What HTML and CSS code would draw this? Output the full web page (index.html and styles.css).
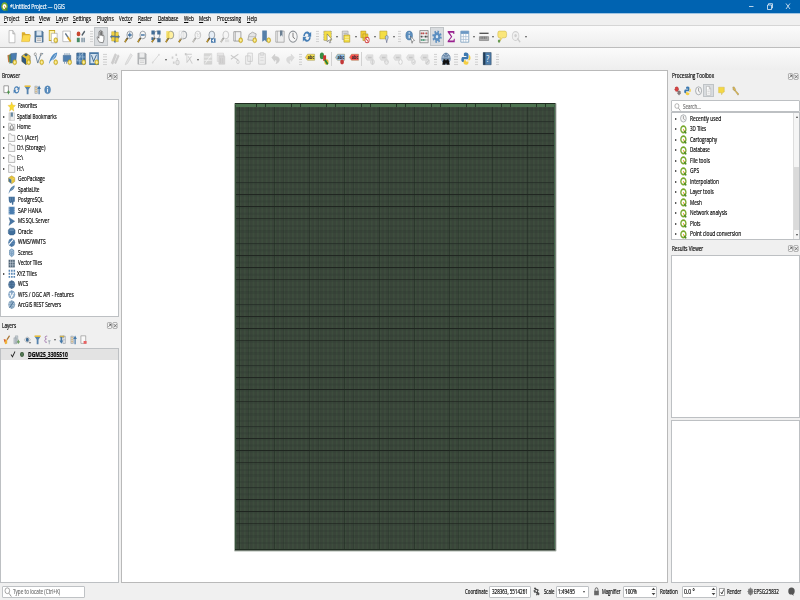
FILE: index.html
```
<!DOCTYPE html>
<html lang="en">
<head>
<meta charset="utf-8">
<title>*Untitled Project — QGIS</title>
<link rel="stylesheet" href="styles.css">
</head>
<body>
<div class="app">
  <header class="titlebar">
    <i data-icon="qgis"></i><span class="title" data-w="55">*Untitled Project — QGIS</span>
    <svg class="winctl" viewBox="0 0 60 13"><path d="M10 6.500h4.500M28.500 5h4v4.500h-4zM29.500 5V3.700h4V8h-1M47 3.500l4 5.500M51 3.500L47 9"/></svg>
  </header>
  <nav class="menubar" id="menu"></nav>
  <div class="toolbar first" id="tb1"></div>
  <div class="toolbar second" id="tb2"></div>
  <main class="work">
    <aside class="left">
      <section class="dock browser">
        <div class="head"><span data-w="18">Browser</span><i data-icon="dock"></i></div>
        <div class="tools" data-tools="addsel refresh filter collapse info"></div>
        <div class="tree" id="browser"></div>
      </section>
      <section class="dock layers">
        <div class="head"><span data-w="14">Layers</span><i data-icon="dock"></i></div>
        <div class="tools" data-tools="brush group eye filter expr:m expand collapse remove"></div>
        <div class="tree"><div class="layer"><i data-icon="check"></i><b class="dot"></b><span class="lname" data-w="40"><u>DGM25_3305510</u></span></div></div>
      </section>
    </aside>
    <div class="canvas"><svg class="map" id="map" viewBox="0 0 323 450"></svg></div>
    <aside class="right">
      <section class="dock processing">
        <div class="head"><span data-w="42">Processing Toolbox</span><i data-icon="dock"></i></div>
        <div class="tools" data-tools="gears python clock doc:p notes wrench"></div>
        <div class="search"><i data-icon="search"></i><span data-w="18">Search…</span></div>
        <div class="tree scrolled"><div class="rows" id="toolbox"></div><div class="scroll"><b class="up"></b><b class="down"></b></div></div>
      </section>
      <section class="dock results">
        <div class="head"><span data-w="31">Results Viewer</span><i data-icon="dock"></i></div>
        <div class="tree"></div>
        <div class="tree info"></div>
      </section>
    </aside>
  </main>
  <footer class="status">
    <div class="field locate"><i data-icon="search"></i><span data-w="47">Type to locate (Ctrl+K)</span></div>
    <span class="push" data-w="22.500">Coordinate</span>
    <div class="field coord"><span data-w="36">328363, 5514261</span></div>
    <i data-icon="extent"></i>
    <span class="scale" data-w="10.500">Scale</span>
    <div class="field combo"><span data-w="17">1:49495</span><b class="down"></b></div>
    <i class="lock" data-icon="lock"></i>
    <span data-w="18.500">Magnifier</span>
    <div class="field spin"><span data-w="12">100%</span><i data-icon="spin"></i></div>
    <span data-w="18">Rotation</span>
    <div class="field spin rot"><span data-w="11">0.0 °</span><i data-icon="spin"></i></div>
    <i class="box" data-icon="check"></i><span data-w="14.500">Render</span>
    <i class="crs" data-icon="crs"></i><span data-w="25">EPSG:25832</span>
    <i class="msg" data-icon="bubble"></i>
  </footer>
</div>
<script src="script.js"></script>
</body>
</html>
```
FILE: styles.css
```
* { box-sizing: border-box; }
body { margin: 0; width: 800px; height: 600px; overflow: hidden; background: #f0f0f0; font: 7px/10px "Open Sans", "Noto Sans", sans-serif; color: #080808; }
.app { width: 800px; height: 600px; display: flex; flex-direction: column; }
i { display: block; flex: none; width: 8px; height: 10px; font-style: normal; }
i svg { display: block; width: 100%; height: 100%; overflow: visible; }
.fit { display: block; flex: none; white-space: nowrap; height: 10px; line-height: 10px; }
.fit > span { display: inline-block; transform-origin: 0 50%; -webkit-text-stroke: .2px currentColor; }
u { text-decoration-thickness: .6px; text-underline-offset: 1px; }

.titlebar { height: 14px; background: #0063b1; border-bottom: 1px solid #9fc4e2; color: #fff; display: flex; align-items: center; flex: none; padding-left: 1px; }
.titlebar i { width: 7px; height: 9px; margin-right: 2px; }
.winctl { width: 60px; height: 13px; margin-left: auto; position: relative; left: -1px; fill: none; stroke: #e3eef7; stroke-width: .8; }
.menubar { height: 10.500px; flex: none; display: flex; padding-left: 4px; align-items: center; background: #f0f0f0; }

.toolbar { display: flex; flex: none; align-items: center; padding-left: 5.200px; background: linear-gradient(#fbfbfb, #eeeeee); border-top: 1px solid #d6d6d6; }
.toolbar.first { height: 22.500px; }
.toolbar.second { height: 23px; border-top-color: #bdbdbd; }
.tool { width: 13.730px; height: 19px; display: flex; align-items: center; justify-content: center; flex: none; position: relative; }
.tool i { width: 10px; height: 13.300px; }
.tool.menu { width: 18.900px; padding-right: 5px; }
.tool.menu::after { content: ""; position: absolute; right: 1.500px; top: 9px; border: 1.600px solid transparent; border-top: 2.200px solid #555; }
.tool.pressed { background: #d9dcdf; border: 1px solid #bfc3c6; }
.tool.off i { opacity: .5; filter: grayscale(.9); }
.grip { width: 6.800px; height: 13px; flex: none; background: radial-gradient(circle, #c9c9c9 .5px, transparent .8px) 2.500px 0 / 1.700px 2.600px; background-clip: content-box; padding: 0 1.500px 0 2px; }
.vsep { width: 2.500px; height: 14px; border-left: 1px solid #d2d2d2; flex: none; }

.work { height: 513px; flex: none; display: flex; }
.left { width: 121px; display: flex; flex-direction: column; }
.right { width: 132px; padding-left: 2.500px; display: flex; flex-direction: column; }
.canvas { width: 547px; border: 1px solid #b9b9b9; background: #fff; padding: 31px 0 0 112px; }
.map { display: block; width: 323px; height: 450px; }
.head { height: 12px; display: flex; align-items: center; justify-content: space-between; padding: 0 1px 0 1.500px; }
.left .head { width: 119px; }
.head i { width: 11px; height: 7px; }
.tools { height: 17px; display: flex; align-items: center; padding-left: 1.500px; }
.browser .tools { padding-bottom: 1px; }
.tools .tool { width: 10.300px; height: 13px; }
.tools .tool i { width: 7.200px; height: 9.600px; }
.tools .tool.menu { width: 15px; }
.tools .tool.menu::after { top: 6px; }
.tree { background: #fff; border: 1px solid #bdc0c3; }
.browser { height: 249px; }
.browser .tree { width: 119px; height: 217.500px; padding-top: .9px; }
.layers .head { padding-top: 1px; }
.layers .tree { width: 119px; height: 235px; }
.row { height: 10.480px; display: flex; align-items: center; }
.row::before { content: ""; width: 7px; flex: none; }
.row.kids::before { width: 0; height: 0; margin: 0 3px 0 2px; border: 1.800px solid transparent; border-left: 2.200px solid #222; border-right: 0; }
.row i { width: 7.400px; height: 9.200px; margin-right: 2px; }
.row:not(.kids)::before { width: 7.200px; }
.layer { height: 10.500px; background: #e3e3e3; display: flex; align-items: center; padding-left: 8.500px; }
.layer i { width: 6px; height: 7px; }
.layer .fit { position: relative; top: .6px; }
.dot { width: 4.500px; height: 5.500px; border-radius: 50%; background: #567e56; border: .5px solid #3f5d40; margin: 0 4px 0 4px; }
.lname { font-weight: 700; }

.processing { height: 173.500px; }
.processing .tools { height: 18px; padding: 0 0 1px 2px; }
.processing .tools .tool:nth-child(n+5) { margin-left: 3px; }
.search { height: 12px; background: #fff; border: 1px solid #bdc0c3; display: flex; align-items: center; padding: 1px 0 0 2px; gap: 2px; color: #777; border-radius: 1px; }
.search i { width: 7px; height: 8px; }
.scrolled { height: 127.500px; display: flex; justify-content: space-between; overflow: hidden; }
.rows { padding-top: .6px; }
.rows .row.kids::before { margin-left: 3px; }
.rows .row i { margin-left: .6px; margin-right: 2.700px; width: 6.800px; height: 8.800px; }
.scroll { width: 6px; display: flex; flex-direction: column; align-items: center; justify-content: space-between; padding: 3px 0; background: linear-gradient(#f5f5f5 0 54px, #dadada 54px 117px, #f5f5f5 117px); border-left: 1px solid #ddd; }
.up, .down { width: 0; height: 0; border: 1.500px solid transparent; border-top: 0; border-bottom: 2.500px solid #444; }
.down { border: 1.500px solid transparent; border-bottom: 0; border-top: 2.500px solid #444; }
.results .tree { height: 163.500px; }
.results .head { height: 11.500px; }
.results .info { height: 163px; margin-top: 2px; }

.status { height: 17px; flex: none; display: flex; align-items: center; padding: .8px 0 0 1.500px; }
.field { background: #fff; border: 1px solid #bfc2c5; border-radius: 1px; height: 12.500px; display: flex; align-items: center; padding-left: 1.500px; flex: none; }
.locate { width: 83px; gap: 1px; color: #777; }
.push { margin-left: 380.500px; }
.coord { width: 42px; margin: 0 2px 0 1.500px; }
.status > i { width: 7px; height: 9px; }
.scale { margin-left: 3.500px; }
.combo { width: 33.500px; justify-content: space-between; padding-right: 3px; margin: 0 4px 0 1.500px; }
.lock { margin-right: 2px; }
.spin { width: 34.500px; justify-content: space-between; margin: 0 3px 0 2px; }
.spin i { width: 5px; height: 9px; }
.rot { margin: 0 2px 0 3.500px; width: 35px; }
.status > .box { width: 6.500px; height: 8px; background: #fff; border: 1px solid #aaa; margin-right: 1.500px; }
.crs { margin: 0 0 0 6px; }
.msg { margin-left: 9px; }
```
FILE: script.js
```
const star = '<circle cx="18.500" cy="18.500" r="4.500" fill="#e9cd3f" stroke="#a88b14"/><path d="M18.500 16v5M16 18.500h5" stroke="#fff6c0" stroke-width="1.500"/>';
const page = '<path d="M5 1h9l5 6v16H5z" fill="#fff" stroke="#888"/><path d="M14 1v6h5" fill="#ddd" stroke="#888"/>';
const lens = (x, f = '#f6f6f6') => `<path d="M9 14L2 22" stroke="#5c4a25" stroke-width="3.500"/><path d="M6 17L2 22" stroke="#d8a92c" stroke-width="2"/><circle cx="14" cy="9" r="7" fill="${f}" stroke="#7c858c" stroke-width="1.500"/>${x || ''}`;
const tag = (f, x = '') => `<path d="M1 10l5-6h17v11H6z" fill="${f}" stroke="#887a3a" stroke-width=".8"/><text x="6" y="13" font-size="9" font-weight="700" fill="#222">abc</text>${x}`;
const offtag = x => `<path d="M1 10l4-5h14v10H5z" fill="#ccc" stroke="#aaa"/><path d="M7 10h9" stroke="#999" stroke-width="3"/><circle cx="18" cy="18" r="4.500" fill="#ddd" stroke="#aaa" stroke-width="1.500"/>${x}`;
const globe = (f, s) => `<circle cx="12" cy="12" r="10" fill="${f}" stroke="${s}" stroke-width="1.500"/><path d="M2 12h20M12 2v20M5 6q7 4 14 0M5 18q7-4 14 0M12 2q-10 10 0 20q10-10 0-20" fill="none" stroke="${s}" stroke-width="1.200"/>`;
const I = {
  qgis: '<circle cx="12" cy="12" r="9" fill="#fff" stroke="#78a92d" stroke-width="4.500"/><path d="M15 16l7 7" stroke="#4d8b24" stroke-width="4.500"/><path d="M11 11l4 5" stroke="#e99b26" stroke-width="3"/>',
  new: page,
  open: '<path d="M2 4h7l2 3h10v13H2z" fill="#dcae2c"/><path d="M1 21L5 9h18l-3 12z" fill="#fcd94f" stroke="#cda535" stroke-width=".8"/>',
  save: '<path d="M2 2h18l2 2v18H2z" fill="#567da3" stroke="#42627f"/><path d="M6 2h12v8H6z" fill="#d9e5ef"/><path d="M5 13h14v9H5z" fill="#eee"/><path d="M7 16h10M7 19h10" stroke="#777"/>',
  layout: '<path d="M3 1h13v18H3z" fill="#fff5b0" stroke="#c9a928" stroke-width="2"/><path d="M8 6h14v17H8z" fill="#fff" stroke="#888"/>' + star,
  manager: '<path d="M2 2h18v19H2z" fill="#fff" stroke="#888"/><path d="M8 6l8 9" stroke="#678" stroke-width="3"/><path d="M14 13l7 8" stroke="#d6a52c" stroke-width="4"/>',
  style: '<circle cx="6" cy="7" r="4.500" fill="#c9472f"/><path d="M14 10l7-8" stroke="#4d5a64" stroke-width="3"/><path d="M2 14h7v8H2z" fill="#468b64"/><path d="M13 14h3v8h-3zM18 14h3v8h-3z" fill="#6d8598"/>',
  hand: '<path d="M8 22c-3-4-6-7-5-9s3 0 4 2V4c0-2 3-2 3 0v6V2c0-2 3-2 3 0v8V4c0-2 3-2 3 0v7c0-2 3-2 3 0v6l-2 6z" fill="#fff" stroke="#555" stroke-width="1.300"/>',
  pansel: '<path d="M12 0l5 6h-3v4h4V7l6 5-6 5v-3h-4v4h3l-5 6-5-6h3v-4H6v3l-6-5 6-5v3h4V6H7z" fill="#4d75a3"/><path d="M4 3h7v7H4zM13 4h7v7h-7zM4 13h7v7H4zM13 14h7v7h-7z" fill="#f3d442" stroke="#a78c16" stroke-width=".7"/>',
  zin: lens('<path d="M14 4.500v9M9.500 9h9" stroke="#3c6d9e" stroke-width="2.500"/>'),
  zout: lens('<path d="M9.500 9h9" stroke="#3c6d9e" stroke-width="2.500"/>'),
  zfull: lens() + '<path d="M1 1h8v7H1zM15 1h8v7h-8zM15 15h8v7h-8zM1 13h5v5H1z" fill="#416c96"/>',
  zsel: lens('', '#fff0a0') + '<path d="M3 2h8v13H3z" fill="#f5d94b" opacity=".8"/>',
  zlayer: lens('', '#eee') + '<path d="M3 2h9v15H3z" fill="#fff" stroke="#aaa" opacity=".6"/>',
  znative: lens('<text x="10" y="12" font-size="8" fill="#777">1:1</text>') ,
  zlast: lens('<path d="M12 15h11v8H12z" fill="#4b7cae"/><path d="M19 16l-5 3 5 3z" fill="#fff"/>', '#e6eef6'),
  znext: lens('<path d="M12 17h10v5H12z" fill="#ccc"/>'),
  mapview: '<path d="M2 3h17v17H2z" fill="#f2f2f2" stroke="#888" stroke-width="1.500"/><path d="M6 3v17" stroke="#888"/>' + star,
  map3d: '<path d="M2 18L5 8l8-4 9 3-3 12z" fill="#e5e5e5" stroke="#999" stroke-width="1.500"/><path d="M5 12h15" stroke="#999"/>' + star,
  bookmark: '<path d="M3 1h11v21l-5-4-6 3z" fill="#557fa9"/>' + star,
  bookmarks: '<path d="M2 2h20v20H2z" fill="#eee" stroke="#999" stroke-width="1.500"/><path d="M6 2v20" stroke="#999"/><path d="M12 1h6v11l-3-3-3 3z" fill="#6a7f92"/>',
  clock: '<circle cx="12" cy="12" r="10" fill="#f6f6f6" stroke="#8b9095" stroke-width="2"/><path d="M12 5v8l5 3" fill="none" stroke="#666" stroke-width="1.700"/>',
  refresh: '<path d="M3 11C4 3 14 0 19 6l3-3v9h-9l3-3C12 4 7 6 7 11zM21 13c-1 8-11 11-16 5l-3 3v-9h9l-3 3c4 5 9 3 9-2z" fill="#477fb6"/>',
  select: '<path d="M2 2h18v17H2z" fill="#f4de45" stroke="#666" stroke-dasharray="2 1"/><path d="M10 7l11 10-5 .5 3 5-3 1-2-5-4 3z" fill="#fff" stroke="#555"/>',
  selval: '<path d="M3 2h14v15H3z" fill="#ddd" stroke="#888"/><path d="M7 9h14v13H7z" fill="#f4de45" stroke="#977f17"/><path d="M6 6h9" stroke="#888"/><path d="M9 13h10M9 17h10" stroke="#fff"/>',
  desel: '<path d="M2 2h12v12H2zM7 7h12v12H7z" fill="#f2cf38" stroke="#a6851c"/><circle cx="17" cy="18" r="5" fill="#fff" stroke="#d34747" stroke-width="2"/><path d="M14 15l6 6" stroke="#d34747" stroke-width="2"/>',
  selloc: '<path d="M2 2h17v14H2z" fill="#f4de45" stroke="#a68b1e"/><path d="M15 13c0-4 7-4 7 0 0 3-3 5-3.500 10C18 18 15 16 15 13z" fill="#b9d1e3" stroke="#557"/>',
  identify: '<circle cx="10" cy="10" r="8" fill="#5c8fbf" stroke="#3d6c98"/><path d="M10 9v6M10 4v2.500" stroke="#fff" stroke-width="2.500"/><path d="M13 11l10 8-5 1-1 4z" fill="#fff" stroke="#444"/>',
  abacus: '<path d="M2 1h20v22H2z" fill="#eee" stroke="#777" stroke-width="1.500"/><path d="M2 6h20M2 12h20M2 18h20" stroke="#777"/><path d="M5 6h7M16 6h3" stroke="#c34848" stroke-width="3" stroke-dasharray="3 1"/><path d="M5 12h4M14 12h6" stroke="#444" stroke-width="3" stroke-dasharray="3 1"/><path d="M5 18h10" stroke="#33996d" stroke-width="3" stroke-dasharray="3 1"/>',
  gear: '<circle cx="12" cy="12" r="9" fill="none" stroke="#5b8ec0" stroke-width="4.500" stroke-dasharray="3.500 3.570"/><circle cx="12" cy="12" r="5.500" fill="#dce8f3" stroke="#5b8ec0" stroke-width="5"/>',
  sigma: '<path d="M4 2h16v5h-2l-1-2h-8l6 7-7 7h10l1-3h2v6H4v-2l8-8-8-8z" fill="#99208e"/>',
  table: '<path d="M2 2h19v20H2z" fill="#fff" stroke="#6b93b7" stroke-width="1.500"/><path d="M2 2h19v5H2z" fill="#6b98c4"/><path d="M2 12h19M2 17h19M8 7v15M14 7v15" stroke="#a4bcd1" stroke-width="1.500"/>',
  measure: '<path d="M1 6h22" stroke="#555" stroke-width="2.500"/><path d="M1 12h22v7H1z" fill="#aaa" stroke="#666"/><path d="M5 12v4M9 12v4M13 12v4M17 12v4" stroke="#444"/>',
  tip: '<path d="M5 2h14q4 0 4 4v4q0 4-4 4h-6l-6 6 1-6H5q-3 0-3-4V6q0-4 3-4z" fill="#fae67a" stroke="#c8af40"/><circle cx="5" cy="20" r="3" fill="#689a50"/>',
  locate: '<circle cx="11" cy="11" r="8" fill="#eee" stroke="#aaa" stroke-width="2"/><circle cx="11" cy="10" r="3" fill="#aaa"/><path d="M15 15l7 7" stroke="#aaa" stroke-width="3"/>',
  dsm: '<path d="M1 6l10-3v13L3 19z" fill="#c9763b"/><path d="M4 6l13-3v14L6 21z" fill="#578f5d"/><path d="M9 3l14-1-2 16-11 2z" fill="#4a7db1" stroke="#315b84"/>' + star,
  gpkg: '<path d="M2 7l10-5 10 5v10l-10 6L2 17z" fill="#e8c53b" stroke="#8b7322"/><path d="M2 7l10 5v11L2 17z" fill="#48749c"/><path d="M2 7l10 5 10-5M12 12v11" fill="none" stroke="#f7e387" stroke-width="1.500"/>',
  gpkgnew: '<path d="M2 7l10-5 10 5v10l-10 6L2 17z" fill="#e8c53b" stroke="#555"/><path d="M2 7l10 5v11L2 17z" fill="#33597b"/><path d="M7 5l5-2 5 2-5 3z" fill="#33597b"/>' + star,
  vnew: '<path d="M3 3l6 17L17 3h5" fill="none" stroke="#56728b" stroke-width="1.700"/><circle cx="3" cy="4" r="2.500" fill="#fff" stroke="#555"/><circle cx="17" cy="4" r="2" fill="#fff" stroke="#555"/>' + star,
  feather: '<path d="M2 23C4 12 11 2 22 1 22 9 15 14 7 16z" fill="#4f7ba5"/><path d="M3 22L19 4" stroke="#c6dbec"/>',
  feathernew: '<path d="M2 23C4 12 11 2 22 1 22 9 15 14 7 16z" fill="#4f8bc5"/><path d="M3 22L19 4" stroke="#fff"/>' + star,
  chip: '<path d="M3 6h18v11H3z" fill="#4f7faf" stroke="#345d86"/><path d="M7 2v4M12 2v4M17 2v4M6 17v4M11 17v4" stroke="#7a97b2" stroke-width="2"/>' + star,
  mesh: '<path d="M2 2h20v20H2z" fill="#4778a8" stroke="#2d5680" stroke-width="1.500"/><path d="M2 9h20M2 16h20M9 2v20M16 2v20M2 16L16 2" stroke="#c9ddef"/>' + star,
  virtual: '<path d="M2 2h20v20H2z" fill="#d3e2ef" stroke="#4677a5" stroke-width="3"/><path d="M6 6l5 11 7-12" fill="none" stroke="#3c658c" stroke-width="2"/>' + star,
  pencils: '<path d="M3 20L12 3l4 2L7 22zM11 20l8-15 3 2-8 14z" fill="#b5a8a8" stroke="#948989"/>',
  pencil: '<path d="M4 20L16 3l4 3L8 21l-5 2z" fill="#d8d5cf" stroke="#999"/>',
  line: '<path d="M4 19L19 5" stroke="#aaa" stroke-width="1.500"/><circle cx="4" cy="19" r="2" fill="#bbb"/><circle cx="19" cy="5" r="2" fill="#bbb"/>',
  points: '<path d="M4 8h4v4H4zM13 3h4v4h-4zM16 11h3v3h-3zM7 17h4v4H7z" fill="#aaa"/><circle cx="18" cy="19" r="4" fill="#ddd" stroke="#aaa" stroke-width="2"/>',
  vertex: '<path d="M3 4h16M7 4v16M8 18L18 8M10 8l10 13" stroke="#a5a5a5" stroke-width="2"/><path d="M2 2h4v4H2z" fill="#999"/>',
  multi: '<path d="M3 3h18v19H3z" fill="#bcb8a5" stroke="#999"/><path d="M3 9h18M3 15h18M5 21L20 5" stroke="#fff" stroke-width="1.500"/>',
  trash: '<path d="M3 2h15v15H3z" fill="#ddd" stroke="#b99898"/><path d="M7 8h14v14H7z" fill="#c5b4b4" stroke="#a58f8f"/><path d="M3 6h18M11 11v9M16 11v9" stroke="#a08888"/>',
  cut: '<path d="M2 6l18 9M2 13l18-9" stroke="#999" stroke-width="2"/><circle cx="19" cy="18" r="3" fill="none" stroke="#999" stroke-width="1.500"/>',
  copy: '<path d="M9 2h11v15H9zM4 7h11v15H4z" fill="#f1f1f1" stroke="#999" stroke-width="1.500"/>',
  paste: '<path d="M4 3h16v19H4z" fill="#e5e5e5" stroke="#999" stroke-width="1.500"/><path d="M8 1h8v5H8zM8 10h8M8 15h8" fill="#ccc" stroke="#999"/>',
  undo: '<path d="M2 10l7-6v4q12 0 11 7-1 5-8 6 5-7-3-7v3z" fill="#b0a8a0" stroke="#999"/>',
  redo: '<path d="M22 10l-7-6v4Q3 8 4 15q1 5 8 6-5-7 3-7v3z" fill="#c4c4c4" stroke="#aaa"/>',
  label: tag('#f4df51'),
  diagram: '<ellipse cx="7" cy="7" rx="5" ry="6" fill="#398e47"/><path d="M10 6h7v10h-7z" fill="#cf3030"/><ellipse cx="18" cy="18" rx="5" ry="5" fill="#e2b92a"/><path d="M14 14l7 8" stroke="#278134" stroke-width="4"/>',
  pinlab: tag('#91bfe9', '<circle cx="17" cy="18" r="4.500" fill="#c33838"/>'),
  redlab: tag('#ff5454'),
  l1: offtag('<path d="M18 14v9" stroke="#aaa" stroke-width="2"/>'), l2: offtag('<path d="M12 18q6-5 11 0" stroke="#999" fill="none"/>'),
  l3: offtag('<path d="M18 14v8M14 18h8" stroke="#fff" stroke-width="2"/>'), l4: offtag('<path d="M16 18q2 4 5-1" stroke="#888" fill="none"/>'), l5: offtag('<path d="M14 22l8-8" stroke="#aaa" stroke-width="3"/>'),
  osm: globe('#b5c9dc', '#4b6f95') + '<path d="M3 23l3-10h4l2 3 2-3h4l3 10h-7l-2-4-2 4z" fill="#111"/>',
  python: '<path d="M12 1c-6 0-5 2-5 6h6v2H3c-3 2-3 9 1 9h3v-5h9c3-1 2-4 2-9q-1-3-6-3z" fill="#3d79b0"/><path d="M12 23c6 0 6-3 6-6h-6v-2h9c3-2 2-8-1-9h-1v5q-1 4-5 4H8c-3 2-3 8 4 8z" fill="#f5cf44"/>',
  help: '<path d="M3 1h19v22H3z" fill="#4d7dab" stroke="#223b53"/><path d="M3 1h5v22H3z" fill="#243e57"/><text x="10" y="18" font-size="17" fill="#fff">?</text>',
  dock: '<g fill="#fafafa" stroke="#777" stroke-width="1.500"><rect x="1" y="2" width="9" height="20" rx="2"/><rect x="13" y="2" width="9" height="20" rx="2"/></g><path d="M3 17L8 7M4 7h4v7M15 7l6 11M21 7l-6 11" fill="none" stroke="#333" stroke-width="1.500"/>',
  addsel: '<path d="M3 2h15v17H3z" fill="#fff" stroke="#777" stroke-width="2"/><path d="M18 14v9M14 18h9" stroke="#489445" stroke-width="3"/>',
  filter: '<path d="M2 4h20l-7 8v11H9V12z" fill="#5583ae"/><path d="M2 1h20v4H2z" fill="#e7bd3c"/>',
  collapse: '<path d="M3 3h8v18H3z" fill="#eee" stroke="#456"/><path d="M4 7h6M4 12h6M4 17h6" stroke="#c18f2f" stroke-width="2"/><path d="M15 23V10h-4l6-9 6 9h-4v13z" fill="#4579a9"/>',
  expand: '<path d="M13 3h8v18h-8z" fill="#eee" stroke="#456"/><path d="M3 2h14v4H3zM14 12h7" fill="#e5ba41" stroke="#789"/><path d="M5 5h5v9h4l-6 8-7-8h4z" fill="#4579a9"/>',
  info: '<circle cx="12" cy="12" r="10" fill="#5a8dbe" stroke="#3f719f"/><path d="M12 10v8M12 5v3" stroke="#fff" stroke-width="3"/>',
  brush: '<path d="M13 12l9-10" stroke="#aa7738" stroke-width="4"/><path d="M3 11l11 1v9l-7 2z" fill="#efb33b"/><path d="M2 10l7 2-3 7z" fill="#d65739"/>',
  group: '<path d="M8 2h8v18H8zM3 7h9v15H3z" fill="#c7d0d5" stroke="#76838c"/><path d="M18 12v10M13 17h10" stroke="#6ea061" stroke-width="3"/>',
  eye: '<path d="M1 12q10-14 20 0-10 13-20 0z" fill="#eee" stroke="#777"/><circle cx="11" cy="12" r="5" fill="#3f6c94"/><path d="M16 18h8l-4 4z" fill="#555"/>',
  expr: '<path d="M11 3C2 1 2 9 8 10 0 11 1 20 10 18" fill="none" stroke="#88549a" stroke-width="2"/><path d="M13 13h10l-4 5v5h-3v-5z" fill="#a7b2bb"/>',
  remove: '<path d="M3 2h16v19H3z" fill="#f9f9f9" stroke="#777" stroke-width="1.500"/><path d="M12 15h10v7H12z" fill="#e96262"/>',
  gears: '<circle cx="9" cy="8" r="6" fill="#d64141" stroke="#a43737" stroke-width="2" stroke-dasharray="3 2"/><circle cx="17" cy="17" r="5" fill="#8a7b7b" stroke="#555" stroke-width="2" stroke-dasharray="2 2"/>',
  doc: page + '<path d="M8 10h8M8 14h8M8 18h8" stroke="#888"/>',
  notes: '<path d="M2 3h19v12l-6 2-3 5v-5H2z" fill="#f4d845" stroke="#c6a72f"/>',
  wrench: '<path d="M2 3l5-1 5 6-1 3-4 1-5-5 4 1zM11 10l12 10-3 3L9 12" fill="#e2bd4c" stroke="#86754b"/>',
  search: '<circle cx="10" cy="9" r="7" fill="none" stroke="#777" stroke-width="1.700"/><path d="M15 15l7 8" stroke="#777" stroke-width="2"/>',
  fav: '<path d="M12 0l3 8 9 1-7 6 2 9-7-5-7 5 2-9-7-6 9-1z" fill="#fbdd32" stroke="#d8ae2d"/>',
  bm: '<path d="M3 2h18v20H3z" fill="#eee" stroke="#999"/><path d="M7 2v20" stroke="#888"/><path d="M9 1h7v13l-3-3-4 3z" fill="#64869f"/>',
  home: '<path d="M2 3h7l2 3h11v16H2z" fill="#f6f6f6" stroke="#888" stroke-width="1.500"/><path d="M7 12l5-4 5 4v7H7z" fill="none" stroke="#444" stroke-width="2"/>',
  folder: '<path d="M2 2h7l3 4h10v16H2z" fill="#f7f7f7" stroke="#909090" stroke-width="1.700"/>',
  pg: '<path d="M2 2h20v13h-4l-1 8h-4l-1-7-5 3-4-5z" fill="#426e9a"/><path d="M8 4v10M15 4v8" stroke="#8eb1cf"/>',
  hana: '<path d="M2 2h20v20H2z" fill="#497db0"/><path d="M2 5h3M2 10h3M2 15h3M2 20h3M19 5h3M19 10h3M19 15h3M19 20h3" stroke="#fff" stroke-width="2"/>',
  ms: '<path d="M3 1l19 10L3 22l4-10z" fill="#4776a5" stroke="#345c84"/>',
  oracle: '<path d="M6 3h12l5 5v8l-5 5H6l-5-5V8z" fill="#416f9c" stroke="#28527c"/><path d="M5 8h14" stroke="#9bb9d4" stroke-width="2"/>',
  wms: globe('#6b9ac8', '#345f8b') + '<path d="M3 17L18 3" stroke="#fff" stroke-width="3"/>',
  scenes: '<path d="M5 6l7-4 7 4v12l-7 5-7-5z" fill="#a1bfd9" stroke="#45739d" stroke-width="1.500"/><path d="M5 6l7 4 7-4M12 10v12M5 12l7 4 7-4" fill="none" stroke="#45739d"/>',
  vt: '<path d="M2 2h20v20H2z" fill="#4d6274"/><path d="M8.500 2v20M15.500 2v20M2 8.500h20M2 15.500h20" stroke="#dfe8ef" stroke-width="1.500"/>',
  xyz: '<path d="M2 2h5v5H2zM10 2h5v5h-5zM18 2h5v5h-5zM2 10h5v5H2zM10 10h5v5h-5zM18 10h5v5h-5zM2 18h5v5H2zM10 18h5v5h-5zM18 18h5v5h-5z" fill="#5685b4"/>',
  wcs: globe('#6b92b8', '#294e74'), wfs: globe('#c5d9eb', '#4f7ca8') + '<path d="M7 7l5 12 6-12" fill="none" stroke="#fff" stroke-width="3"/>',
  arc: globe('#c5d9eb', '#557d9e') + '<path d="M5 20L18 5" stroke="#315b81" stroke-width="2"/>',
  check: '<path d="M4 12l6 8L20 2" fill="none" stroke="#222" stroke-width="3.500"/>',
  extent: '<path d="M4 3l15 6M2 10l18 8M9 2L5 15M17 7l-5 15" stroke="#444" stroke-width="3"/><circle cx="18" cy="18" r="4" fill="#555"/>',
  lock: '<path d="M4 10h16v12H4z" fill="#666"/><path d="M7 11V6q5-8 10 0v5" fill="none" stroke="#666" stroke-width="3"/>',
  spin: '<path d="M3 8l9-6 9 6zM3 16l9 6 9-6z" fill="#444"/><path d="M2 12h20" stroke="#ccc"/>',
  crs: '<circle cx="12" cy="12" r="9" fill="#888"/><path d="M12 1v22M1 12h22M5 5l14 14M5 19L19 5" stroke="#666" stroke-width="1.500"/>',
  bubble: '<path d="M12 1q11 0 11 10 0 6-5 8l2 4-7-3Q1 21 1 11 1 1 12 1z" fill="#555"/>'
};
const svg = n => `<svg viewBox="0 0 24 24" preserveAspectRatio="none" fill="none">${I[n]}</svg>`;
const icon = n => `<i data-icon="${n}"></i>`;
const byId = id => document.getElementById(id);

// name suffixes: m = drop-down, p = pressed, o = disabled
const tools = list => list.split(' ').map(s => {
  if (s === '|') return '<b class="grip"></b>';
  if (s === '/') return '<b class="vsep"></b>';
  const [n, f = ''] = s.split(':');
  return `<div class="tool${f.includes('m') ? ' menu' : ''}${f.includes('p') ? ' pressed' : ''}${f.includes('o') ? ' off' : ''}">${icon(n)}</div>`;
}).join('');
byId('tb1').innerHTML = tools('new open save layout manager style | hand:p pansel zin zout zfull zsel zlayer znative:o zlast znext:o mapview map3d bookmark bookmarks clock refresh | select:m selval:m desel:m selloc:m | identify abacus gear:p sigma table:m measure:m tip locate:mo');
byId('tb2').innerHTML = tools('dsm gpkgnew vnew feathernew chip mesh virtual | pencils:o pencil:o save:o line:mo points:o vertex:mo multi:o trash:o cut:o copy:o paste:o undo:o redo:o | label diagram / pinlab redlab / l1:o l2:o l3:o l4:o l5:o | osm | python | help |');
document.querySelectorAll('[data-tools]').forEach(e => { e.innerHTML = tools(e.dataset.tools); });

byId('menu').innerHTML = [['<u>P</u>roject', 15.5, 5.5], ['<u>E</u>dit', 9, 5], ['<u>V</u>iew', 11, 5.5], ['<u>L</u>ayer', 12.5, 5], ['<u>S</u>ettings', 18, 5.5], ['<u>P</u>lugins', 16.5, 6], ['Vect<u>o</u>r', 13.5, 5.5], ['<u>R</u>aster', 14, 5.5], ['<u>D</u>atabase', 20.5, 5.5], ['<u>W</u>eb', 10, 5.5], ['<u>M</u>esh', 12, 6], ['Pro<u>c</u>essing', 24, 6], ['<u>H</u>elp', 10, 0]]
  .map(([t, w, g]) => `<span data-w="${w}" style="margin-right:${g}px">${t}</span>`).join('');

const row = ([t, w, n, k]) => `<div class="row${k ? ' kids' : ''}">${icon(n)}<span data-w="${w}">${t}</span></div>`;
byId('browser').innerHTML = [['Favorites', 19.5, 'fav'], ['Spatial Bookmarks', 40, 'bm', 1], ['Home', 14, 'home', 1], ['C:\\ (Acer)', 21, 'folder', 1], ['D:\\ (Storage)', 28, 'folder', 1], ['E:\\', 6, 'folder', 1], ['H:\\', 7, 'folder', 1], ['GeoPackage', 27, 'gpkg'], ['SpatiaLite', 21.5, 'feather'], ['PostgreSQL', 25.5, 'pg'], ['SAP HANA', 24, 'hana'], ['MS SQL Server', 31.5, 'ms'], ['Oracle', 14.5, 'oracle'], ['WMS/WMTS', 28, 'wms'], ['Scenes', 15, 'scenes'], ['Vector Tiles', 24.5, 'vt'], ['XYZ Tiles', 19.5, 'xyz', 1], ['WCS', 10.5, 'wcs'], ['WFS / OGC API - Features', 56, 'wfs'], ['ArcGIS REST Servers', 43, 'arc']].map(row).join('');
byId('toolbox').innerHTML = [['Recently used', 31, 'clock', 1], ['3D Tiles', 16.5], ['Cartography', 27.5], ['Database', 20], ['File tools', 20], ['GPS', 9], ['Interpolation', 28.5], ['Layer tools', 24], ['Mesh', 12], ['Network analysis', 37], ['Plots', 10.5], ['Point cloud conversion', 51]]
  .map(([t, w, n]) => row([t, w, n || 'qgis', 1])).join('');

document.querySelectorAll('[data-icon]').forEach(e => { e.innerHTML = svg(e.dataset.icon); });

// Squeeze each label to its column width
document.querySelectorAll('[data-w]').forEach(e => {
  const w = +e.dataset.w;
  e.classList.add('fit');
  e.innerHTML = `<span>${e.innerHTML}</span>`;
  const s = e.firstChild;
  s.style.transform = `scaleX(${w / s.offsetWidth})`;
  e.style.width = w + 'px';
});

// Point grid of the elevation layer
const hline = (y, c, o) => `<path d="M1 ${y}.5h320" stroke="${c}" stroke-opacity="${o}"/>`;
const vline = (x, o) => `<path d="M${x}.5 5V448" stroke="#1d281f" stroke-opacity="${o}"/>`;
let m = '<rect x="0" y="1" width="322.500" height="448.500" rx="1" fill="#acb5ac"/><rect x="1" y="1" width="320.500" height="447.500" fill="#3a453a"/>';
for (let x = 2; x < 320; x += 4.38) m += `<path d="M${x} 5V448" stroke="#466047" stroke-width="1.800" stroke-opacity=".3"/>`;
for (let y = 8; y < 446; y += 6.1) m += `<path d="M1 ${y}h320" stroke="#2d372e" stroke-width="2" stroke-opacity=".25"/>`;
for (let y = 31 - 61; y < 448; y += 61) {
  for (const [d, o] of [[0, .85], [12, .9], [24, .6], [36, .12], [49, .5]]) if (y + d > 5 && y + d < 446) m += hline(y + d, '#1c211d', o);
}
for (const x of [5, 40, 75, 110, 145, 180, 215, 258, 293]) m += vline(x, .45);
for (const x of [14, 49, 84, 119, 154, 189, 224]) m += vline(x, .25);
m += '<path d="M1 3.500h320" stroke="#4d7350" stroke-width="3"/><path d="M1 1.500h320M1 447.500h320" stroke="#1f2b20"/>';
for (let x = 22.5; x < 320; x += 35) m += `<path d="M${x} 2v3M${x + 9} 2v3" stroke="#273728"/>`;
m += '<path d="M320.500 3v444" stroke="#42664a"/><path d="M1.500 3v444" stroke="#36513a"/>';
byId('map').innerHTML = m;
```
